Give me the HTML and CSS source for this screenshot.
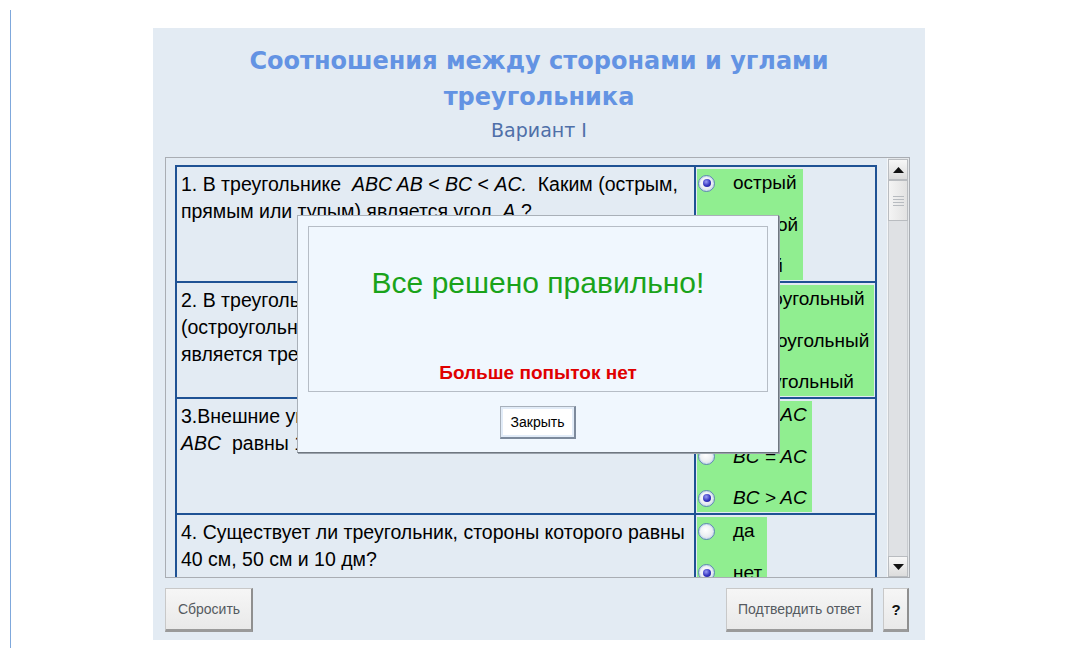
FILE: index.html
```html
<!DOCTYPE html>
<html lang="ru">
<head>
<meta charset="utf-8">
<title>Соотношения между сторонами и углами треугольника</title>
<link rel="stylesheet" href="styles.css">
</head>
<body>
<div class="page">
  <div class="panel">
    <h1 class="title">Соотношения между сторонами и углами треугольника</h1>
    <div class="variant">Вариант I</div>

    <div class="scroller">
      <div class="viewport">
        <table class="quiz">
          <tr>
            <td class="q">1. В треугольнике&nbsp; <i>ABC AB</i> &lt; <i>BC</i> &lt; <i>AC.</i>&nbsp; Каким (острым, прямым или тупым) является угол&nbsp; <i>A</i> ?</td>
            <td class="a">
              <div class="opts">
                <label class="opt"><span class="radio on"></span>острый</label>
                <label class="opt"><span class="radio"></span>прямой</label>
                <label class="opt"><span class="radio"></span>тупой</label>
              </div>
            </td>
          </tr>
          <tr>
            <td class="q">2. В треугольнике&nbsp; <i>ABC</i>&nbsp; угол&nbsp; <i>A</i>&nbsp; равен 100°. Каким (остроугольным, прямоугольным или тупоугольным) является треугольник&nbsp; <i>ABC</i> ?</td>
            <td class="a">
              <div class="opts">
                <label class="opt"><span class="radio"></span>остроугольный</label>
                <label class="opt"><span class="radio"></span>прямоугольный</label>
                <label class="opt"><span class="radio on"></span>тупоугольный</label>
              </div>
            </td>
          </tr>
          <tr>
            <td class="q">3.Внешние углы при вершинах&nbsp; <i>A</i>&nbsp; и&nbsp; <i>B</i>&nbsp; треугольника <i>ABC</i>&nbsp; равны 120° и 150°. Сравните стороны&nbsp; <i>BC</i>&nbsp; и&nbsp; <i>AC</i>.</td>
            <td class="a">
              <div class="opts">
                <label class="opt"><span class="radio"></span><i>BC &lt; AC</i></label>
                <label class="opt"><span class="radio"></span><i>BC = AC</i></label>
                <label class="opt"><span class="radio on"></span><i>BC &gt; AC</i></label>
              </div>
            </td>
          </tr>
          <tr>
            <td class="q">4. Существует ли треугольник, стороны которого равны 40 см, 50 см и 10 дм?</td>
            <td class="a">
              <div class="opts">
                <label class="opt"><span class="radio"></span>да</label>
                <label class="opt"><span class="radio on"></span>нет</label>
              </div>
            </td>
          </tr>
        </table>
      </div>
      <div class="scrollbar">
        <div class="sb-btn"><svg width="11" height="6" viewBox="0 0 11 6"><path d="M0 6 L5.5 0 L11 6 Z" fill="#111"/></svg></div>
        <div class="sb-thumb"><span></span><span></span><span></span><span></span></div>
        <div class="sb-track"></div>
        <div class="sb-btn"><svg width="11" height="6" viewBox="0 0 11 6"><path d="M0 0 L11 0 L5.5 6 Z" fill="#111"/></svg></div>
      </div>
    </div>

    <div class="actions">
      <button class="btn reset">Сбросить</button>
      <span class="spacer"></span>
      <button class="btn confirm">Подтвердить ответ</button>
      <button class="btn help">?</button>
    </div>

    <div class="dialog">
      <div class="dialog-body">
        <div class="result">Все решено правильно!</div>
        <div class="attempts">Больше попыток нет</div>
      </div>
      <div class="dialog-foot">
        <button class="close">Закрыть</button>
      </div>
    </div>
  </div>
</div>
</body>
</html>
```

FILE: styles.css
```css
html, body {
  margin: 0;
  background: #ffffff;
}

body {
  font-family: "Liberation Sans", Arial, sans-serif;
  color: #000;
}

/* page column with the thin blue rule on its left */
.page {
  margin: 10px 0 0 10px;
  padding-top: 18px;
  border-left: 1px solid #7fa8dc;
  height: 620px;
}

.panel {
  position: relative;
  margin-left: 142px;
  width: 772px;
  height: 612px;
  background: #e3ebf3;
  display: flex;
  flex-direction: column;
}

.title {
  margin: 0;
  padding: 15px 60px 0;
  font: bold 24px/36px "DejaVu Sans", Verdana, sans-serif;
  color: #6393e3;
  text-align: center;
}

.variant {
  margin-top: 4px;
  font: 19px/22px "DejaVu Sans", Verdana, sans-serif;
  color: #4f6fa8;
  text-align: center;
}

/* scrolling question area */
.scroller {
  margin: 16px 0 0 12px;
  width: 745px;
  height: 421px;
  box-sizing: border-box;
  border: 1px solid #a9adb3;
  display: flex;
  overflow: hidden;
}

.viewport {
  flex: 1;
  overflow: hidden;
  padding: 7px 0 0 9px;
}

.quiz {
  border-collapse: separate;
  border-spacing: 0;
  border-top: 2px solid #1f5294;
  border-left: 2px solid #1f5294;
  width: 702px;
}

.quiz td {
  border-right: 2px solid #1f5294;
  border-bottom: 2px solid #1f5294;
  vertical-align: top;
  height: 116px;
  box-sizing: border-box;
}

.q {
  width: 517px;
  padding: 4px 4px 0 4px;
  font-size: 19.5px;
  line-height: 27px;
}

.a {
  width: 179px;
  padding: 2px 0 0 1px;
}

.opts {
  display: inline-flex;
  flex-direction: column;
  gap: 13.5px;
  background: #90ee90;
  padding-right: 5px;
}

.opt {
  display: flex;
  align-items: center;
  height: 28px;
  font-size: 19px;
  white-space: nowrap;
}

.radio {
  position: relative;
  flex: none;
  width: 17px;
  height: 17px;
  box-sizing: border-box;
  margin: 0 18px 0 1px;
  border-radius: 50%;
  border: 1px solid #5f86b4;
  background: radial-gradient(circle at 45% 40%, #ffffff 0%, #eef1f4 45%, #cfd7df 100%);
  box-shadow: inset 0 0 0 1px #c9dcef;
}

.radio.on::after {
  content: "";
  position: absolute;
  left: 3.5px;
  top: 3.5px;
  width: 8px;
  height: 8px;
  border-radius: 50%;
  background: radial-gradient(circle at 40% 35%, #9a9cf4 0%, #3434c0 55%, #1c1c86 100%);
}

/* scrollbar */
.scrollbar {
  width: 22px;
  flex: none;
  display: flex;
  flex-direction: column;
  background: #e4e7ea;
  border-left: 1px solid #f4f6f8;
  box-sizing: border-box;
  padding: 1px 1px 0 0;
}

.sb-btn {
  height: 21px;
  flex: none;
  box-sizing: border-box;
  border: 1px solid #b9bcc0;
  background: linear-gradient(#f7f7f7, #dcdcdc);
  display: flex;
  align-items: center;
  justify-content: center;
}

.sb-thumb {
  height: 41px;
  flex: none;
  box-sizing: border-box;
  border: 1px solid #b9bcc0;
  background: linear-gradient(90deg, #f4f4f4, #e2e2e2);
  display: flex;
  flex-direction: column;
  align-items: center;
  justify-content: center;
  gap: 2px;
}

.sb-thumb span {
  width: 11px;
  height: 1px;
  background: #b7bbc0;
}

.sb-track {
  flex: 1;
  background: #dfe1e4;
  border-left: 1px solid #c8cbcf;
  border-right: 1px solid #c8cbcf;
}

/* bottom buttons */
.actions {
  display: flex;
  gap: 10px;
  margin: 10px 16px 0 12px;
}

.spacer {
  flex: 1;
}

.btn {
  height: 44px;
  box-sizing: border-box;
  font: 14px "Liberation Sans", Arial, sans-serif;
  color: #555a60;
  background: linear-gradient(#f6f6f6, #e9e9e9);
  border: 1px solid #c8c8c8;
  border-right: 2px solid #8f8f8f;
  border-bottom: 3px solid #9a9a9a;
  padding: 0 0 0 1px;
}

.reset {
  width: 88px;
}

.confirm {
  width: 147px;
}

.help {
  width: 26px;
  font-weight: bold;
  font-size: 15px;
  color: #111;
}

/* result dialog shown over the quiz */
.dialog {
  position: absolute;
  left: 144px;
  top: 187px;
  width: 482px;
  height: 238px;
  box-sizing: border-box;
  background: #f0f7fe;
  border: 1px solid #a9b0b8;
  border-right-color: #6f7780;
  border-bottom-color: #6f7780;
  box-shadow: 1px 1px 0 #9aa2ab;
  padding: 10px 10px 0;
  display: flex;
  flex-direction: column;
}

.dialog-body {
  height: 166px;
  box-sizing: border-box;
  border: 1px solid #b6bdc6;
  display: flex;
  flex-direction: column;
  align-items: center;
}

.result {
  margin-top: 38px;
  font-size: 30px;
  line-height: 36px;
  color: #1aa31a;
}

.attempts {
  margin-top: auto;
  margin-bottom: 7px;
  font-size: 19px;
  line-height: 22px;
  font-weight: bold;
  color: #e00000;
}

.dialog-foot {
  display: flex;
  justify-content: center;
  padding-top: 14px;
}

.close {
  width: 76px;
  height: 33px;
  box-sizing: border-box;
  font: 14px "Liberation Sans", Arial, sans-serif;
  color: #000;
  background: #ffffff;
  border: 1px solid #a7b0bb;
  border-right: 2px solid #7d8a9c;
  border-bottom: 2px solid #7d8a9c;
  box-shadow: inset 0 0 0 2px #e2ecf8;
  padding: 0;
}
```
